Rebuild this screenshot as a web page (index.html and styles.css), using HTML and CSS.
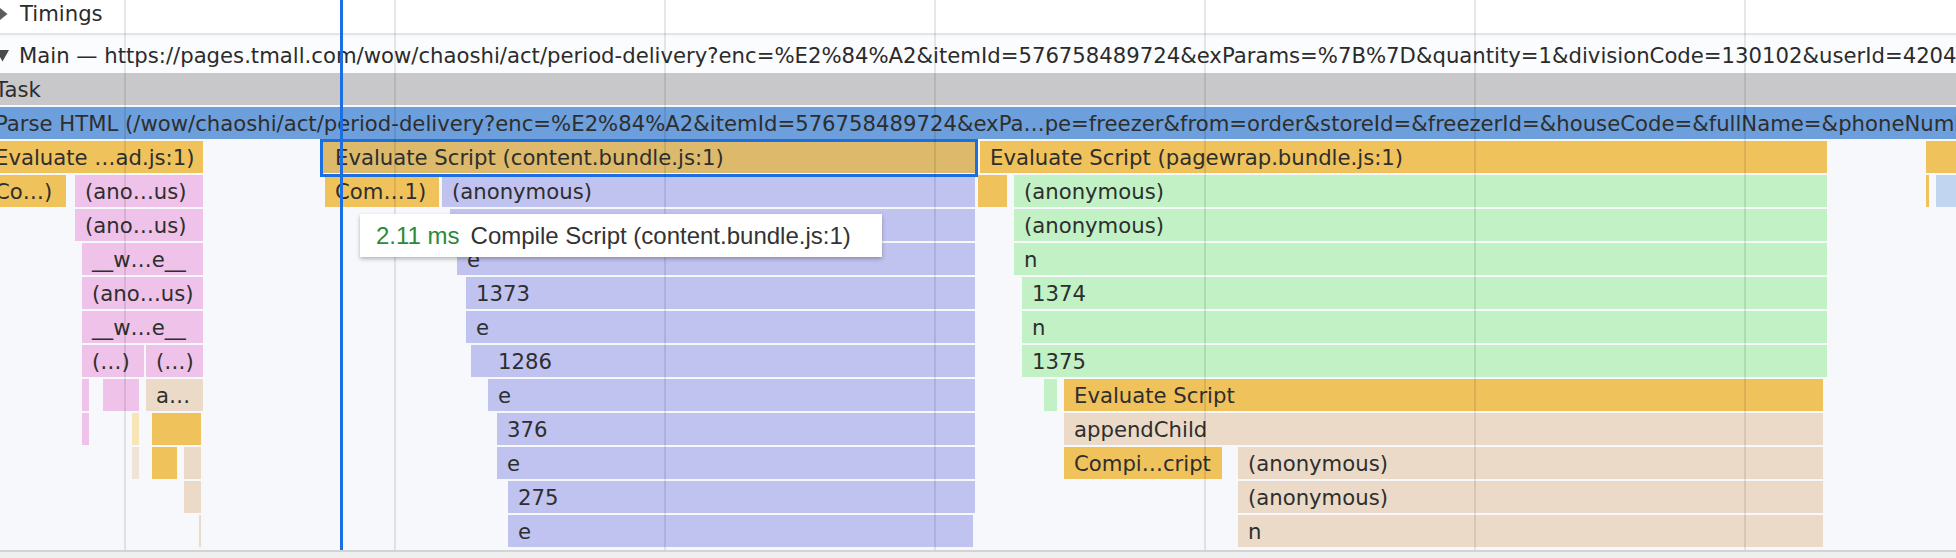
FILE: index.html
```html
<!DOCTYPE html>
<html>
<head>
<meta charset="utf-8">
<title>Performance flame chart</title>
<link rel="stylesheet" href="styles.css">
</head>
<body>
<div class="panel">
  <div class="timings-row">
    <svg class="tri-right" width="8" height="12" viewBox="0 0 8 12"><polygon points="0,0 7.5,6 0,12"/></svg>
    <span class="row-label">Timings</span>
  </div>
  <div class="track">
    <div class="track-header">
      <svg class="tri-down" width="9" height="12" viewBox="0 0 9 12"><polygon points="-4,0 9,0 2.5,11.5"/></svg>
      <span class="row-label">Main — https://pages.tmall.com/wow/chaoshi/act/period-delivery?enc=%E2%84%A2&amp;itemId=576758489724&amp;exParams=%7B%7D&amp;quantity=1&amp;divisionCode=130102&amp;userId=420412</span>
    </div>
    <div class="flame">
      <div class="bar c-task l0" style="left:-15px;width:1990px">Task</div>
      <div class="bar c-parse l1" style="left:-15px;width:1990px">Parse HTML (/wow/chaoshi/act/period-delivery?enc=%E2%84%A2&amp;itemId=576758489724&amp;exPa…pe=freezer&amp;from=order&amp;storeId=&amp;freezerId=&amp;houseCode=&amp;fullName=&amp;phoneNumber=)</div>

      <div class="bar c-or l2" style="left:-15px;width:218px">Evaluate …ad.js:1)</div>
      <div class="bar c-sel l2" style="left:321px;width:656px">Evaluate Script (content.bundle.js:1)</div>
      <div class="bar c-or l2" style="left:980px;width:847px">Evaluate Script (pagewrap.bundle.js:1)</div>
      <div class="bar c-or l2" style="left:1926px;width:60px"></div>

      <div class="bar c-or l3" style="left:-15px;width:81px">Co…)</div>
      <div class="bar c-pink l3" style="left:75px;width:128px">(ano…us)</div>
      <div class="bar c-or l3" style="left:325px;width:114px">Com…1)</div>
      <div class="bar c-purple l3" style="left:442px;width:533px">(anonymous)</div>
      <div class="bar c-or l3" style="left:978px;width:29px"></div>
      <div class="bar c-green l3" style="left:1014px;width:813px">(anonymous)</div>
      <div class="bar c-or l3" style="left:1926px;width:3px"></div>
      <div class="bar c-lblue l3" style="left:1936px;width:40px"></div>

      <div class="bar c-pink l4" style="left:75px;width:128px">(ano…us)</div>
      <div class="bar c-purple l4" style="left:450px;width:525px">(anonymous)</div>
      <div class="bar c-green l4" style="left:1014px;width:813px">(anonymous)</div>

      <div class="bar c-pink l5" style="left:82px;width:121px">__w…e__</div>
      <div class="bar c-purple l5" style="left:457px;width:518px">e</div>
      <div class="bar c-green l5" style="left:1014px;width:813px">n</div>

      <div class="bar c-pink l6" style="left:82px;width:121px">(ano…us)</div>
      <div class="bar c-purple l6" style="left:466px;width:509px">1373</div>
      <div class="bar c-green l6" style="left:1022px;width:805px">1374</div>

      <div class="bar c-pink l7" style="left:82px;width:121px">__w…e__</div>
      <div class="bar c-purple l7" style="left:466px;width:509px">e</div>
      <div class="bar c-green l7" style="left:1022px;width:805px">n</div>

      <div class="bar c-pink l8" style="left:82px;width:62px">(…)</div>
      <div class="bar c-pink l8" style="left:146px;width:57px">(…)</div>
      <div class="bar c-purple l8" style="left:471px;width:17px"></div>
      <div class="bar c-purple l8" style="left:488px;width:487px">1286</div>
      <div class="bar c-green l8" style="left:1022px;width:805px">1375</div>

      <div class="bar c-pink l9" style="left:82px;width:7px"></div>
      <div class="bar c-pink l9" style="left:103px;width:36px"></div>
      <div class="bar c-beige l9" style="left:146px;width:57px">a…</div>
      <div class="bar c-purple l9" style="left:488px;width:487px">e</div>
      <div class="bar c-green l9" style="left:1044px;width:13px"></div>
      <div class="bar c-or l9" style="left:1064px;width:759px">Evaluate Script</div>

      <div class="bar c-pink l10" style="left:82px;width:7px"></div>
      <div class="bar c-lyel l10" style="left:132px;width:7px"></div>
      <div class="bar c-or l10" style="left:152px;width:49px"></div>
      <div class="bar c-purple l10" style="left:497px;width:478px">376</div>
      <div class="bar c-beige l10" style="left:1064px;width:759px">appendChild</div>

      <div class="bar c-lbeige l11" style="left:132px;width:7px"></div>
      <div class="bar c-or l11" style="left:152px;width:25px"></div>
      <div class="bar c-beige l11" style="left:184px;width:17px"></div>
      <div class="bar c-purple l11" style="left:497px;width:478px">e</div>
      <div class="bar c-or l11" style="left:1064px;width:158px">Compi…cript</div>
      <div class="bar c-beige l11" style="left:1238px;width:585px">(anonymous)</div>

      <div class="bar c-beige l12" style="left:184px;width:17px"></div>
      <div class="bar c-purple l12" style="left:508px;width:467px">275</div>
      <div class="bar c-beige l12" style="left:1238px;width:585px">(anonymous)</div>

      <div class="bar c-beige l13" style="left:199px;width:2px"></div>
      <div class="bar c-purple l13" style="left:508px;width:465px">e</div>
      <div class="bar c-beige l13" style="left:1238px;width:585px">n</div>

      <div class="selection"></div>
    </div>
  </div>

  <div class="grid">
    <div class="gridline" style="left:124px"></div>
    <div class="gridline" style="left:394px"></div>
    <div class="gridline" style="left:664px"></div>
    <div class="gridline" style="left:934px"></div>
    <div class="gridline" style="left:1204px"></div>
    <div class="gridline" style="left:1474px"></div>
    <div class="gridline" style="left:1744px"></div>
  </div>
  <div class="cursor"></div>
  <div class="tooltip"><span class="tt-time">2.11 ms</span><span class="tt-name">Compile Script (content.bundle.js:1)</span></div>
</div>
<div class="footer"></div>
</body>
</html>
```

FILE: styles.css
```css
html, body {
  margin: 0;
  padding: 0;
}
body {
  width: 1956px;
  height: 558px;
  overflow: hidden;
  background: #f6f8fc;
  font-family: "DejaVu Sans", "Liberation Sans", sans-serif;
  font-size: 21.2px;
  color: #2b2b2b;
}
.panel {
  position: relative;
  height: 550px;
  overflow: hidden;
}
.timings-row {
  height: 33px;
  background: #ffffff;
  border-bottom: 2px solid #e3e4e6;
  display: flex;
  align-items: flex-start;
  line-height: 27px;
  white-space: nowrap;
}
.tri-right {
  fill: #5c5c5c;
  margin-top: 8px;
  flex: none;
}
.row-label {
  margin-left: 12px;
}
.track {
  padding-top: 2px;
}
.track-header {
  height: 36px;
  line-height: 38px;
  background: #fbfcfe;
  display: flex;
  align-items: flex-start;
  white-space: nowrap;
  overflow: hidden;
}
.tri-down {
  fill: #4a4a4a;
  margin-top: 13px;
  flex: none;
}
.track-header .row-label {
  margin-left: 10px;
}
.flame {
  position: relative;
  height: 477px;
}
.bar {
  position: absolute;
  height: 32px;
  line-height: 34px;
  padding-left: 10px;
  box-sizing: border-box;
  white-space: nowrap;
  overflow: hidden;
  color: #2e2e2e;
}
.bar:empty {
  padding-left: 0;
}
.l0 { top: 0; }
.l1 { top: 34px; }
.l2 { top: 68px; }
.l3 { top: 102px; }
.l4 { top: 136px; }
.l5 { top: 170px; }
.l6 { top: 204px; }
.l7 { top: 238px; }
.l8 { top: 272px; }
.l9 { top: 306px; }
.l10 { top: 340px; }
.l11 { top: 374px; }
.l12 { top: 408px; }
.l13 { top: 442px; }

.c-task { background: #c8c8ca; }
.c-parse { background: #6c9fdc; }
.c-or { background: #f0c25b; }
.c-sel { background: #ddb96b; padding-left: 14px; }
.c-pink { background: #efc2ea; }
.c-purple { background: #c0c3ef; }
.c-green { background: #c1f1c5; }
.c-beige { background: #ebdac7; }
.c-lyel { background: #f6e5b6; }
.c-lbeige { background: #f0e4d8; }
.c-lblue { background: #c2d5f0; }

.selection {
  position: absolute;
  left: 320px;
  top: 66px;
  width: 658px;
  height: 38px;
  border: 3px solid #1c6fe3;
  box-sizing: border-box;
}
.grid {
  position: absolute;
  inset: 0;
  pointer-events: none;
}
.gridline {
  position: absolute;
  top: 0;
  bottom: 0;
  width: 2px;
  background: rgba(0, 0, 0, 0.09);
}
.cursor {
  position: absolute;
  left: 340px;
  top: 0;
  bottom: 0;
  width: 3px;
  background: #1c6fe3;
}
.tooltip {
  position: absolute;
  left: 360px;
  top: 214px;
  width: 522px;
  height: 43px;
  box-sizing: border-box;
  padding-left: 16px;
  background: #ffffff;
  box-shadow: 0 2px 4px rgba(0, 0, 0, 0.28);
  font-family: "Liberation Sans", Arial, sans-serif;
  font-size: 24px;
  line-height: 43px;
  white-space: nowrap;
  color: #333333;
}
.tt-time {
  color: #2c8a37;
  margin-right: 11px;
}
.footer {
  height: 6px;
  border-top: 2px solid #d2d3d5;
  background: #efefef;
}
```
